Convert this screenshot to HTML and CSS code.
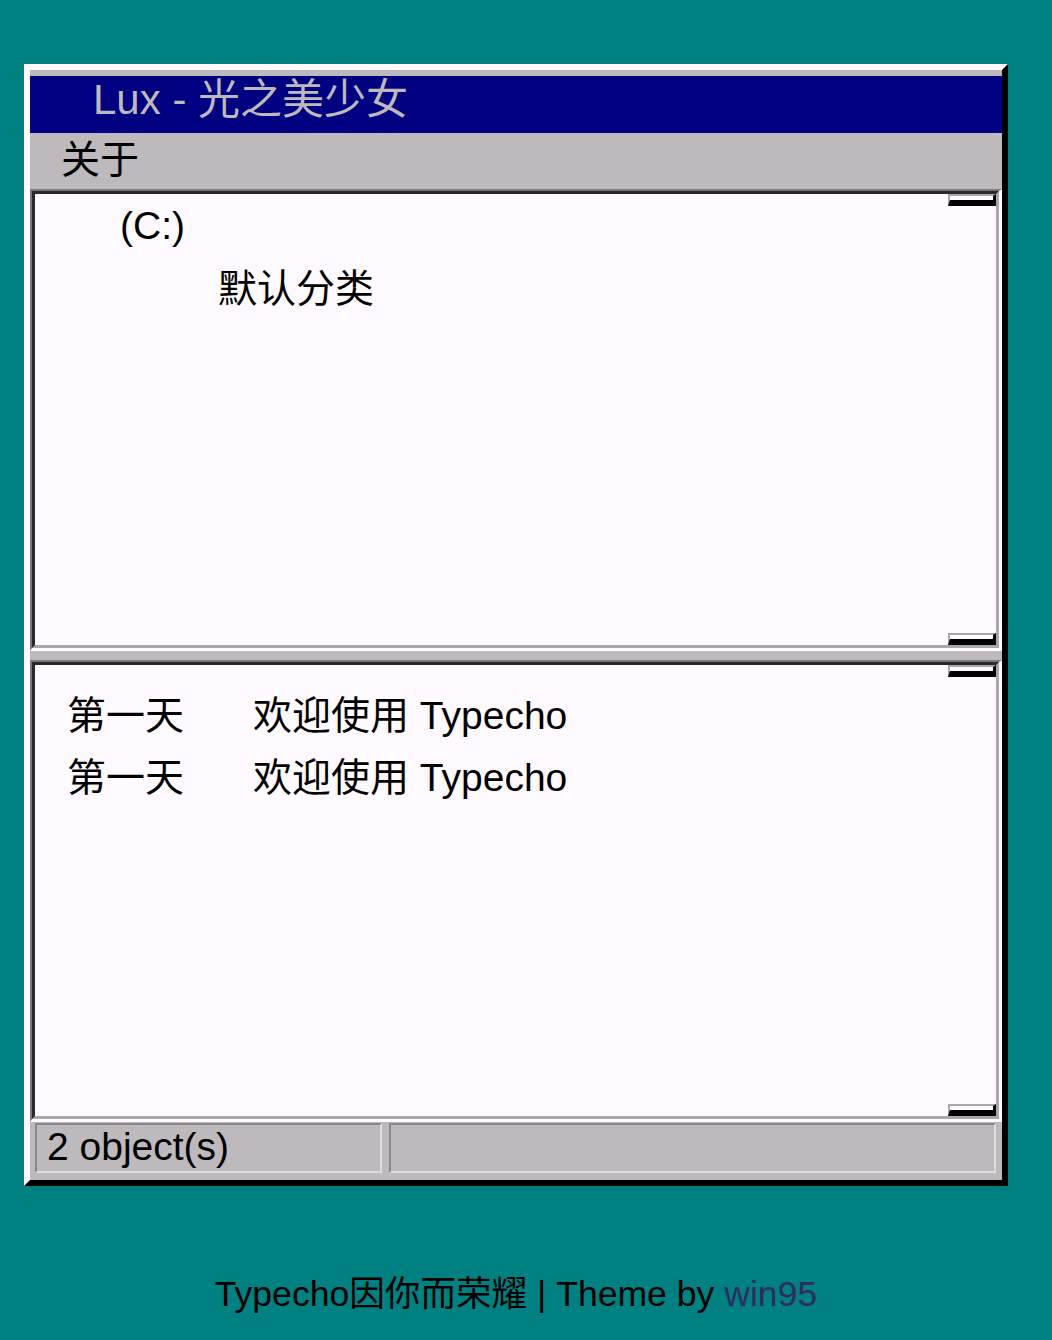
FILE: index.html
```html
<!DOCTYPE html>
<html lang="zh-CN">
<head>
<meta charset="utf-8">
<title>Lux - 光之美少女</title>
<link rel="stylesheet" href="styles.css">
</head>
<body>
<div class="page">
  <div class="window">
    <div class="titlebar">Lux - 光之美少女</div>
    <div class="menubar"><a class="menu-item" href="#">关于</a></div>

    <div class="pane">
      <div class="pane-inner">
        <ul class="pane-content tree">
          <li class="drive">(C:)</li>
          <li class="folder">默认分类</li>
        </ul>
        <div class="scrollbar"><span class="sb"></span><span class="sb"></span></div>
      </div>
    </div>

    <div class="pane pane-lower">
      <div class="pane-inner">
        <div class="pane-content posts">
          <span class="post-date">第一天</span><span class="post-title">欢迎使用 Typecho</span>
          <span class="post-date">第一天</span><span class="post-title">欢迎使用 Typecho</span>
        </div>
        <div class="scrollbar"><span class="sb"></span><span class="sb"></span></div>
      </div>
    </div>

    <div class="statusbar">
      <div class="status-cell status-count">2 object(s)</div>
      <div class="status-cell status-rest"></div>
    </div>
  </div>

  <footer class="footer">Typecho因你而荣耀 | Theme by <a class="footer-link" href="#">win95</a></footer>
</div>
</body>
</html>
```

FILE: styles.css
```css
html, body {
  margin: 0;
  padding: 0;
}

body {
  background: #008080;
  font-family: "Liberation Sans", "Noto Sans CJK SC", sans-serif;
  font-size: 39px;
  color: #000;
}

.page {
  padding: 64px 0 0 24px;
  width: 984px;
}

.window {
  width: 984px;
  box-sizing: border-box;
  border-style: solid;
  border-width: 6px;
  border-color: #fffaff #000 #000 #fffaff;
  padding-top: 6px;
  background: #bdb9bd;
}

.titlebar {
  height: 57px;
  background: #000080;
  color: #bdb9bd;
  font-size: 42px;
  line-height: 47px;
  padding-left: 63px;
  white-space: nowrap;
}

.menubar {
  height: 56px;
  padding-left: 31px;
  line-height: 53px;
  box-sizing: border-box;
}

.menu-item {
  color: #000;
  text-decoration: none;
}

.pane {
  height: 462px;
  box-sizing: border-box;
  border-style: solid;
  border-width: 2px 3px 3px 2px;
  border-color: #7b777b #fffaff #fffaff #7b777b;
}

.pane-lower {
  margin-top: 9px;
}

.pane-inner {
  height: 100%;
  box-sizing: border-box;
  border-style: solid;
  border-width: 3px;
  border-color: #2b282b #aba8ab #aba8ab #2b282b;
  background: #fffaff;
  display: flex;
}

.pane-content {
  flex: 1;
  margin: 0;
  padding: 0;
}

.scrollbar {
  width: 48px;
  display: flex;
  flex-direction: column;
  justify-content: space-between;
}

.sb {
  display: block;
  height: 12px;
  box-sizing: border-box;
  border-style: solid;
  border-width: 2px 3px 6px 2px;
  border-color: #aba8ab #000 #000 #aba8ab;
  background: #fffaff;
}

.tree {
  list-style: none;
  line-height: 63px;
}

.drive {
  padding-left: 85px;
}

.folder {
  padding-left: 183px;
}

.posts {
  display: grid;
  grid-template-columns: 186px auto;
  align-content: start;
  padding: 20px 0 0 32px;
  line-height: 62px;
}

.statusbar {
  height: 58px;
  box-sizing: border-box;
  display: flex;
  gap: 7px;
  padding: 1px 6px 7px 5px;
}

.status-cell {
  height: 50px;
  box-sizing: border-box;
  border-style: solid;
  border-width: 2px;
  border-color: #8a878a #dedbde #dedbde #8a878a;
  line-height: 43px;
  white-space: nowrap;
}

.status-count {
  width: 347px;
  padding-left: 10px;
}

.status-rest {
  flex: 1;
}

.footer {
  margin-top: 88px;
  text-align: center;
  font-size: 35.6px;
  line-height: 40px;
  color: #000;
}

.footer-link {
  color: #2e2d63;
  text-decoration: none;
}
```
